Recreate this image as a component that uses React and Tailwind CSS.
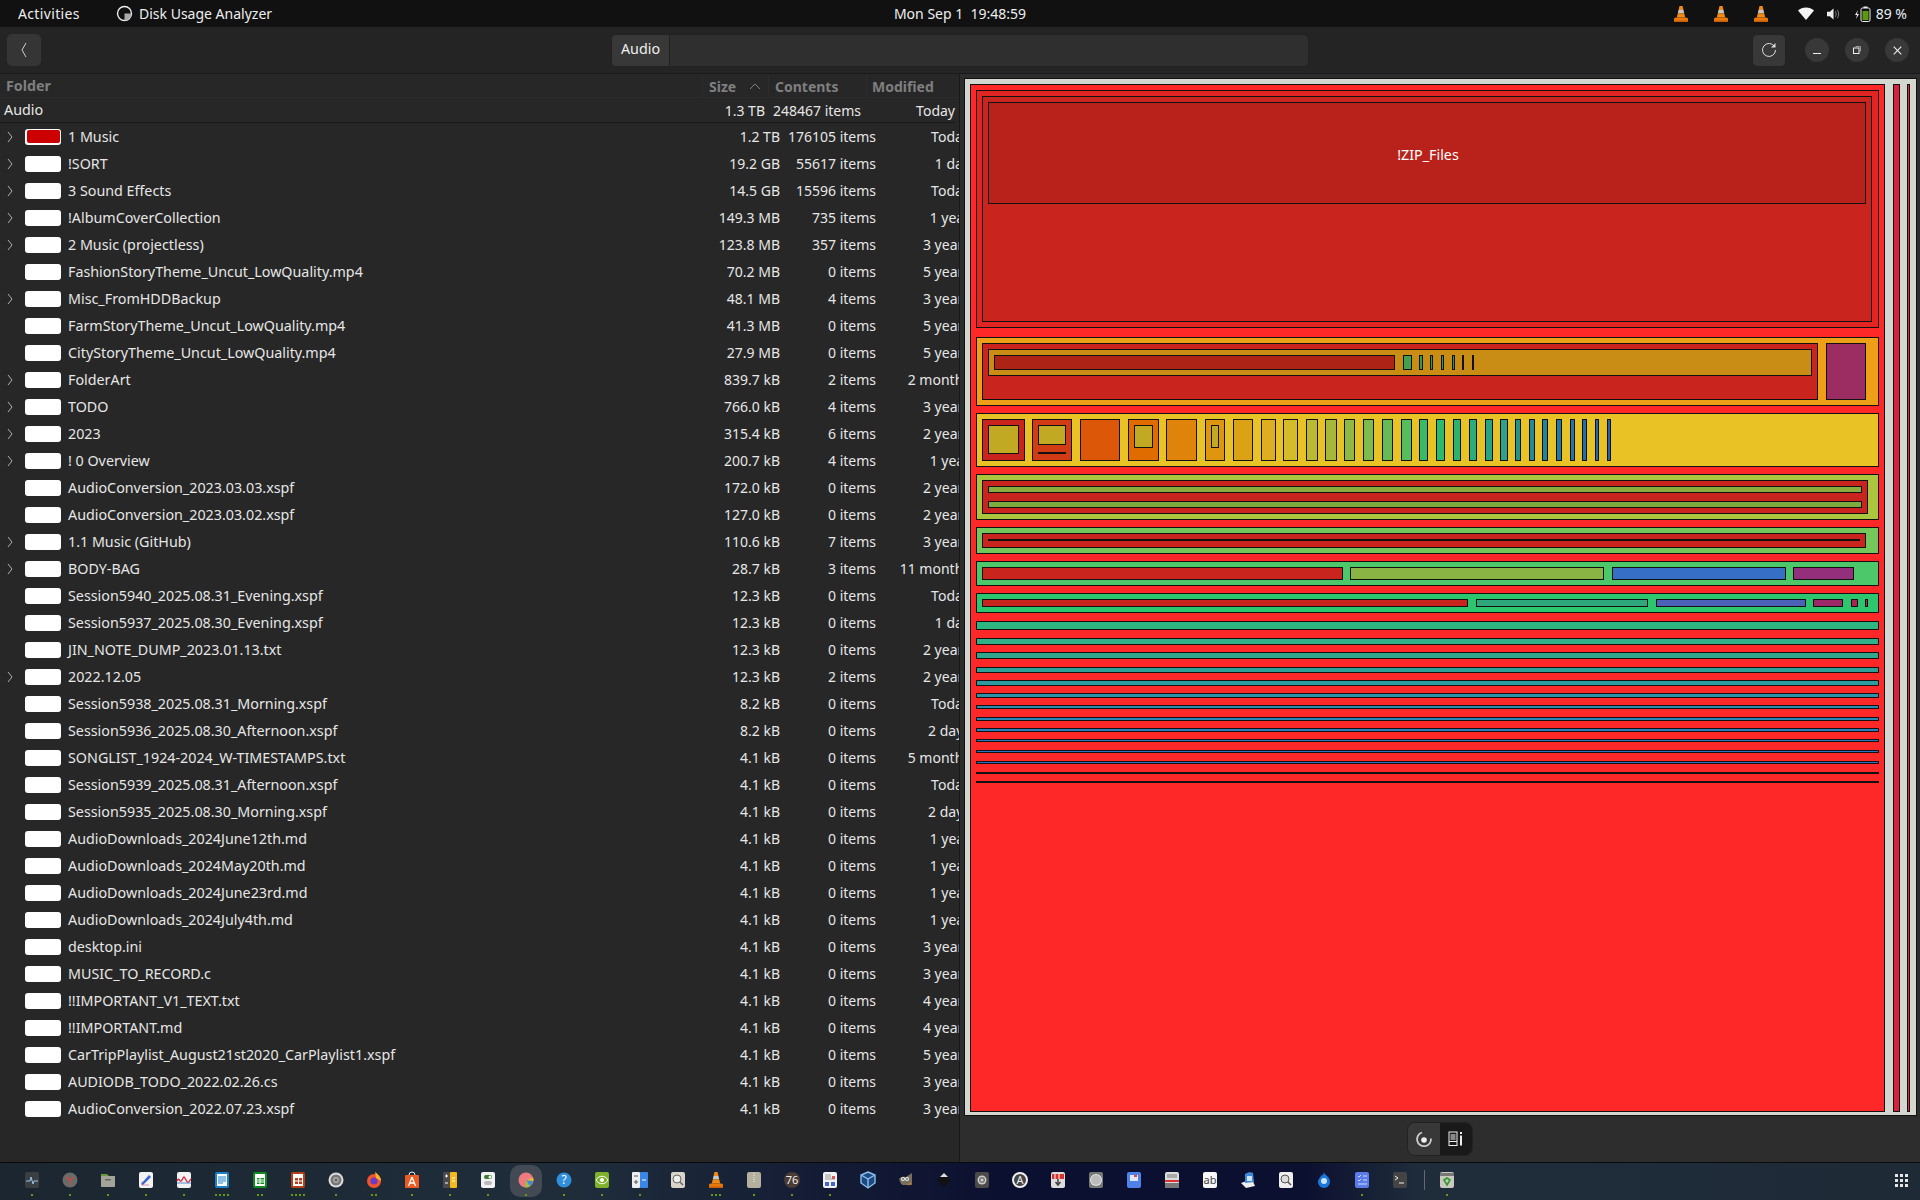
import React from "react";

const FILES = [
  ["1 Music", "1.2 TB", "176105", "Today", 1],
  ["!SORT", "19.2 GB", "55617", "1 day", 1],
  ["3 Sound Effects", "14.5 GB", "15596", "Today", 1],
  ["!AlbumCoverCollection", "149.3 MB", "735", "1 year", 1],
  ["2 Music (projectless)", "123.8 MB", "357", "3 years", 1],
  ["FashionStoryTheme_Uncut_LowQuality.mp4", "70.2 MB", "0", "5 years", 0],
  ["Misc_FromHDDBackup", "48.1 MB", "4", "3 years", 1],
  ["FarmStoryTheme_Uncut_LowQuality.mp4", "41.3 MB", "0", "5 years", 0],
  ["CityStoryTheme_Uncut_LowQuality.mp4", "27.9 MB", "0", "5 years", 0],
  ["FolderArt", "839.7 kB", "2", "2 months", 1],
  ["TODO", "766.0 kB", "4", "3 years", 1],
  ["2023", "315.4 kB", "6", "2 years", 1],
  ["! 0 Overview", "200.7 kB", "4", "1 year", 1],
  ["AudioConversion_2023.03.03.xspf", "172.0 kB", "0", "2 years", 0],
  ["AudioConversion_2023.03.02.xspf", "127.0 kB", "0", "2 years", 0],
  ["1.1 Music (GitHub)", "110.6 kB", "7", "3 years", 1],
  ["BODY-BAG", "28.7 kB", "3", "11 months", 1],
  ["Session5940_2025.08.31_Evening.xspf", "12.3 kB", "0", "Today", 0],
  ["Session5937_2025.08.30_Evening.xspf", "12.3 kB", "0", "1 day", 0],
  ["JIN_NOTE_DUMP_2023.01.13.txt", "12.3 kB", "0", "2 years", 0],
  ["2022.12.05", "12.3 kB", "2", "2 years", 1],
  ["Session5938_2025.08.31_Morning.xspf", "8.2 kB", "0", "Today", 0],
  ["Session5936_2025.08.30_Afternoon.xspf", "8.2 kB", "0", "2 days", 0],
  ["SONGLIST_1924-2024_W-TIMESTAMPS.txt", "4.1 kB", "0", "5 months", 0],
  ["Session5939_2025.08.31_Afternoon.xspf", "4.1 kB", "0", "Today", 0],
  ["Session5935_2025.08.30_Morning.xspf", "4.1 kB", "0", "2 days", 0],
  ["AudioDownloads_2024June12th.md", "4.1 kB", "0", "1 year", 0],
  ["AudioDownloads_2024May20th.md", "4.1 kB", "0", "1 year", 0],
  ["AudioDownloads_2024June23rd.md", "4.1 kB", "0", "1 year", 0],
  ["AudioDownloads_2024July4th.md", "4.1 kB", "0", "1 year", 0],
  ["desktop.ini", "4.1 kB", "0", "3 years", 0],
  ["MUSIC_TO_RECORD.c", "4.1 kB", "0", "3 years", 0],
  ["!!IMPORTANT_V1_TEXT.txt", "4.1 kB", "0", "4 years", 0],
  ["!!IMPORTANT.md", "4.1 kB", "0", "4 years", 0],
  ["CarTripPlaylist_August21st2020_CarPlaylist1.xspf", "4.1 kB", "0", "5 years", 0],
  ["AUDIODB_TODO_2022.02.26.cs", "4.1 kB", "0", "3 years", 0],
  ["AudioConversion_2022.07.23.xspf", "4.1 kB", "0", "3 years", 0],
];

const RC = "#c9241d";
const OL = "#c1a924";
const RECTS = [
  [964, 78, 1917, 1116, "#d3d7cf"],
  [970, 84, 1885, 1112, "#ff2828"],
  [1893, 84, 1900, 1112, "#d8203f"],
  [1907, 84, 1910, 1112, "#e2263a"],
  [976, 90, 1879, 328, "#e02523"],
  [982, 96, 1872, 322, RC],
  [988, 102, 1866, 204, "#b9221a"],
  [976, 337, 1879, 406, "#ec9f17"],
  [982, 343, 1818, 400, RC],
  [988, 349, 1812, 376, "#c98d15"],
  [994, 355, 1395, 370, "#ad2315"],
  [1403, 355, 1412, 370, "#43a04d"],
  [1419, 355, 1423, 370, "#2e9e50"],
  [1430, 355, 1433, 370, "#2a9a60"],
  [1441, 355, 1444, 370, "#2a9a60"],
  [1452, 355, 1455, 370, "#26907c"],
  [1462, 355, 1464, 370, "#111"],
  [1472, 355, 1474, 370, "#111"],
  [1826, 343, 1866, 400, "#9c2d63"],
  [976, 413, 1879, 467, "#e9c326"],
  [982, 419, 1025, 461, RC],
  [988, 425, 1019, 454, OL],
  [1032, 419, 1072, 461, "#d13c15"],
  [1038, 425, 1066, 445, OL],
  [1038, 452, 1066, 454, "#111"],
  [1080, 419, 1120, 461, "#dc5708"],
  [1128, 419, 1159, 461, "#e06c00"],
  [1134, 425, 1153, 448, OL],
  [1166, 419, 1197, 461, "#df830a"],
  [1205, 419, 1225, 461, "#df960f"],
  [1211, 425, 1219, 448, OL],
  [1233, 419, 1253, 461, "#dca216"],
  [1261, 419, 1276, 461, "#dfae20"],
  [1283, 419, 1298, 461, "#d3bb2a"],
  [1306, 419, 1318, 461, "#b9b933"],
  [1325, 419, 1337, 461, "#a5b83b"],
  [1344, 419, 1355, 461, "#90b944"],
  [1363, 419, 1374, 461, "#7dbb4c"],
  [1382, 419, 1393, 461, "#68bb54"],
  [1401, 419, 1412, 461, "#56bd5d"],
  [1419, 419, 1428, 461, "#39ba66"],
  [1436, 419, 1445, 461, "#2bbb6c"],
  [1453, 419, 1461, 461, "#2db370"],
  [1469, 419, 1477, 461, "#2bac7e"],
  [1485, 419, 1493, 461, "#2aa286"],
  [1500, 419, 1508, 461, "#2ea08c"],
  [1515, 419, 1521, 461, "#24948f"],
  [1529, 419, 1535, 461, "#23889a"],
  [1542, 419, 1548, 461, "#24849e"],
  [1556, 419, 1562, 461, "#2479a4"],
  [1570, 419, 1575, 461, "#2473aa"],
  [1582, 419, 1587, 461, "#246eb0"],
  [1595, 419, 1599, 461, "#2468b4"],
  [1607, 419, 1611, 461, "#2461b6"],
  [976, 474, 1879, 520, "#aac63f"],
  [982, 480, 1868, 514, RC],
  [988, 486, 1862, 493, "#8cab3d"],
  [988, 501, 1862, 508, "#7eab3e"],
  [976, 527, 1879, 554, "#74c75a"],
  [982, 533, 1866, 548, RC],
  [988, 539, 1860, 541, "#111"],
  [976, 561, 1879, 586, "#4cc76a"],
  [982, 567, 1343, 580, RC],
  [1350, 567, 1604, 580, "#8ab544"],
  [1612, 567, 1786, 580, "#3670c6"],
  [1793, 567, 1854, 580, "#932f7b"],
  [976, 593, 1879, 613, "#2cc66f"],
  [982, 599, 1468, 607, RC],
  [1476, 599, 1648, 607, "#2ea87c"],
  [1656, 599, 1806, 607, "#4c62b8"],
  [1813, 599, 1843, 607, "#9c2867"],
  [1851, 599, 1858, 607, "#a82558"],
  [1865, 599, 1868, 607, "#c8234a"],
  [976, 621, 1879, 630, "#2eb680"],
  [976, 638, 1879, 645, "#30b088"],
  [976, 652, 1879, 659, "#30a68f"],
  [976, 667, 1879, 673, "#2fa098"],
  [976, 680, 1879, 686, "#2e9a9f"],
  [976, 693, 1879, 698, "#2e92a8"],
  [976, 705, 1879, 709, "#2d8aae"],
  [976, 717, 1879, 721, "#2d84b6"],
  [976, 728, 1879, 732, "#2d80bd"],
  [976, 739, 1879, 742, "#2d79c2"],
  [976, 750, 1879, 753, "#2d73c4"],
  [976, 761, 1879, 764, "#2d6fc7"],
  [976, 772, 1879, 774, "#111"],
  [976, 781, 1879, 783, "#111"],
];

function Treemap() {
  return (
    <svg width="953" height="1038" viewBox="964 78 953 1038" className="block" shapeRendering="crispEdges">
      {RECTS.map(([x0, y0, x1, y1, f], i) =>
        x1 - x0 <= 2 || y1 - y0 <= 2 ? (
          <rect key={i} x={x0} y={y0} width={x1 - x0} height={y1 - y0} fill="#111" />
        ) : (
          <rect key={i} x={x0 + 0.5} y={y0 + 0.5} width={x1 - x0 - 1} height={y1 - y0 - 1} fill={f} stroke="#111" strokeWidth="1" />
        )
      )}
      <text x="1428" y="160" textAnchor="middle" fill="#fff" fontSize="14.3" fontFamily="'Noto Sans', sans-serif" shapeRendering="auto">!ZIP_Files</text>
    </svg>
  );
}

function Cone({ s = 18 }) {
  return (
    <svg width={s} height={s} viewBox="0 0 18 18">
      <path d="M7.5 1h3l1 4h-5z" fill="#ef8a1a" />
      <path d="M6.5 5h5l.7 3.2H5.8z" fill="#c8c8c8" />
      <path d="M5.8 8.2h6.4l1 4.3H4.8z" fill="#f08a12" />
      <path d="M2 13.5c0-1 2-1 3-1h8c1 0 3 0 3 1v3H2z" fill="#e8780c" />
      <rect x="2" y="15.5" width="14" height="1.5" fill="#c85f08" />
    </svg>
  );
}

const Paper = ({ c = "#f2f2f2", children }) => (
  <svg width="18" height="18" viewBox="0 0 18 18">
    <rect x="2" y="1" width="14" height="16" rx="2" fill={c} />
    {children}
  </svg>
);
const Svg = ({ children }) => <svg width="18" height="18" viewBox="0 0 18 18">{children}</svg>;

const DOCK = [
  [1, <Paper c="#3a3f44"><path d="M3 10h4l1-4 2 7 1-3h4" stroke="#9cc3e8" strokeWidth="1" fill="none" /></Paper>],
  [1, <Svg><circle cx="9" cy="9" r="7.5" fill="#6a6a6a" /><path d="M9 9 5 6M9 9l4-3M9 9v5" stroke="#d9483b" strokeWidth="1.2" /></Svg>],
  [1, <Svg><path d="M2 3h6l2 2h6v2H2z" fill="#6c9a3a" /><rect x="2" y="5" width="14" height="11" rx="1" fill="#a5a49b" /><rect x="6" y="8" width="6" height="1.5" fill="#666" /></Svg>],
  [1, <Paper><path d="M4 13 12 4l2 2-8 8z" fill="#3465d4" /><path d="M4 14h8M4 11h4" stroke="#b59" strokeOpacity=".6" /></Paper>],
  [1, <Paper><path d="M2 10c2-5 3 3 5-1s2-4 4 0 2 3 5-1" stroke="#d0314a" strokeWidth="1.4" fill="none" /><path d="M2 12h14" stroke="#5b8bd0" /></Paper>],
  [4, <Paper c="#1c7fc9"><rect x="4" y="3" width="10" height="12" fill="#fff" /><path d="M5 6h8M5 8h8M5 10h8M5 12h5" stroke="#1c7fc9" /></Paper>],
  [2, <Paper c="#0e8a1e"><rect x="4" y="3" width="10" height="12" fill="#fff" /><rect x="6" y="7" width="7" height="6" fill="#0e8a1e" /><path d="M6 9h7M6 11h7M9 7v6" stroke="#fff" /></Paper>],
  [4, <Paper c="#b5411c"><rect x="4" y="3" width="10" height="12" fill="#fff" /><rect x="6" y="7" width="7" height="6" fill="#b5411c" /><path d="M6 10h7M9.5 7v6" stroke="#fff" /></Paper>],
  [1, <Svg><circle cx="9" cy="9" r="7.5" fill="#ddd" /><circle cx="9" cy="9" r="5.5" fill="#777" /><circle cx="9" cy="9" r="3" fill="#aaa" /><circle cx="9" cy="9" r="1.5" fill="#666" /></Svg>],
  [2, <Svg><circle cx="9" cy="10" r="7" fill="#f2542d" /><circle cx="9" cy="10" r="3.5" fill="#6a3ac9" /><path d="M10 1c3 2 6 5 6 9l-5-3z" fill="#ffb02a" /></Svg>],
  [1, <Svg><path d="M6 4a3 3 0 0 1 6 0" stroke="#eee" fill="none" /><rect x="2" y="4" width="14" height="13" rx="1" fill="#ee5a24" /><path d="M9 6 5.5 15M9 6l3.5 9M6.5 12h5" stroke="#fff" strokeWidth="1.3" /></Svg>],
  [1, <Svg><rect x="2" y="1" width="7" height="16" rx="1" fill="#4b4b4b" /><rect x="9" y="1" width="7" height="16" rx="1" fill="#f4b91d" /><path d="M4 5h3M5.5 3.5v3M4 12h3M11 7h3M11 10h3" stroke="#fff" /></Svg>],
  [1, <Paper><rect x="5" y="4" width="8" height="4" rx="2" fill="#3a7d2c" /><circle cx="11" cy="6" r="1.5" fill="#fff" /><rect x="5" y="10" width="8" height="4" rx="2" fill="#bbb" /></Paper>],
  [1, <Svg><circle cx="9" cy="9" r="7.5" fill="#ef7a7f" /><path d="M9 9l7 1a7.5 7.5 0 0 1-3 5.5z" fill="#3f8fd0" /><path d="M9 9l4 6.5a7.5 7.5 0 0 1-5 1z" fill="#9ac23c" /><path d="M9 9l7-2.5a7.5 7.5 0 0 1 .5 3.5z" fill="#e6b93a" /></Svg>],
  [1, <Svg><circle cx="9" cy="9" r="7.5" fill="#2f8fdc" /><text x="9" y="13" textAnchor="middle" fontSize="12" fill="#fff" fontFamily="'Noto Sans',sans-serif">?</text></Svg>],
  [1, <Paper c="#7fb22a"><path d="M3 9c3-5 9-5 12 0-3 5-9 5-12 0z" fill="none" stroke="#fff" /><circle cx="9" cy="9" r="2" fill="#fff" /></Paper>],
  [1, <Svg><rect x="1" y="1" width="8" height="16" rx="1" fill="#eee" /><rect x="9" y="1" width="8" height="16" rx="1" fill="#3a86e6" /><path d="M3 5h4M3 11h4M5 9v4" stroke="#555" /><path d="M11 9h4" stroke="#fff" /></Svg>],
  [0, <Paper c="#d8d4c8"><circle cx="8" cy="8" r="4" fill="#eee" stroke="#666" /><path d="m11 11 3 3" stroke="#666" strokeWidth="1.5" /></Paper>],
  [3, <Cone />],
  [1, <Paper c="#b5b09e"><path d="M9 2v9" stroke="#eee" strokeDasharray="1 1" /></Paper>],
  [1, <Svg><circle cx="9" cy="9" r="8" fill="#4a3b36" /><text x="9" y="13" textAnchor="middle" fontSize="11" fill="#eee" fontFamily="'Noto Sans',sans-serif">76</text></Svg>],
  [1, <Paper><path d="M4 4h6M4 6h6M4 8h10" stroke="#999" /><rect x="11" y="5" width="3" height="3" fill="#d55" /><rect x="4" y="11" width="4" height="4" fill="#46c" /><rect x="10" y="11" width="4" height="4" fill="#46c" /></Paper>],
  [0, <Svg><path d="M9 1 16 4v8l-7 5-7-5V4z" fill="#1a4a80" stroke="#8ec0ee" strokeWidth="1.4" /><path d="M3 4.5 9 8l6-3.5M9 8v8" stroke="#8ec0ee" strokeWidth="1.4" fill="none" /></Svg>],
  [0, <Svg><path d="M2 8c3-3 4-2 7-2l6-4v12H6C4 14 3 10 2 8z" fill="#77705f" /><circle cx="6" cy="8" r="2" fill="#eee" /><circle cx="10" cy="8" r="2" fill="#eee" /><circle cx="6" cy="8" r=".8" fill="#111" /><circle cx="10" cy="8" r=".8" fill="#111" /><path d="M11 14l3-2" stroke="#d07a2a" strokeWidth="1.5" /></Svg>],
  [0, <Svg><path d="M9 2 16 9l-7 7-7-7z" fill="#111" /><path d="M9 2 13 6H5z" fill="#dcdcdc" /></Svg>],
  [0, <Paper c="#4a4a4a"><circle cx="9" cy="9" r="4.5" fill="#ccc" /><circle cx="9" cy="9" r="3" fill="#777" /><circle cx="9" cy="9" r="1.5" fill="#ccc" /></Paper>],
  [0, <Svg><circle cx="9" cy="9" r="7" fill="#444" stroke="#eee" strokeWidth="2" /><text x="9" y="13" textAnchor="middle" fontSize="11" fill="#eee" fontFamily="'Noto Sans',sans-serif">A</text></Svg>],
  [0, <Paper c="#ddd"><path d="M3 3h12v5H3z" fill="#d7322c" /><path d="M6 3v5M10 3v5" stroke="#fff" /><path d="M9 8v6M6.5 11 9 14l2.5-3" stroke="#444" strokeWidth="1.5" fill="none" /></Paper>],
  [0, <Paper c="#777"><circle cx="9" cy="9" r="6" fill="#e6e6e6" /><circle cx="9" cy="9" r="5" fill="#bbb" /></Paper>],
  [0, <Paper c="#4f82e8"><rect x="5" y="4" width="8" height="6" fill="#dfe8fb" /><rect x="9" y="4" width="3" height="2" fill="#d44" /></Paper>],
  [0, <Paper c="#dcdcdc"><path d="M4 4h10M4 6h10" stroke="#777" /><rect x="2" y="9" width="14" height="2" fill="#d33" /><rect x="2" y="12" width="14" height="5" fill="#777" /></Paper>],
  [0, <Paper c="#f7f7f7"><text x="9" y="13" textAnchor="middle" fontSize="11" fill="#444" fontFamily="'Noto Sans',sans-serif">ab</text></Paper>],
  [0, <Svg><path d="M2 12 13 8l3 7-9 2z" fill="#eee" /><path d="M6 3c3-2 6-2 8-1l1 9-9 1z" fill="#3c8ad8" /><path d="M8 5h5v5H8z" fill="#cfe3f7" /></Svg>],
  [0, <Paper c="#eee"><circle cx="8" cy="8" r="4" fill="#ddd" stroke="#555" /><path d="m11 11 3 3" stroke="#555" strokeWidth="1.5" /></Paper>],
  [0, <Svg><path d="M9 1c0 3 6 4 6 10a6 6 0 0 1-12 0c0-4 3-4 3-7 1 1 2 1 3-3z" fill="#1a78dc" /><circle cx="9" cy="10" r="3" fill="#cfe3f7" /></Svg>],
  [1, <Paper c="#5b7ce8"><path d="m5 5 1 1 2-2M10 5h4M5 9l1 1 2-2M10 9h4M5 13h9" stroke="#cfd9ff" fill="none" /></Paper>],
  [0, <Paper c="#444"><path d="m4 5 3 2-3 2M8 12h5" stroke="#eee" fill="none" /></Paper>],
];

const Chevron = () => (
  <svg width="8" height="12" viewBox="0 0 8 12"><path d="M2 1l4 5-4 5" fill="none" stroke="#b0b0b0" strokeWidth="1" /></svg>
);

function DockSlot({ dots, icon, active }) {
  return (
    <div className="relative flex h-[37px] w-[38px] shrink-0 items-center justify-center pb-[3px]">
      {active && <div className="absolute top-[2px] h-[32px] w-[32px] rounded-[10px] bg-[#434a54]" />}
      <div className="relative">{icon}</div>
      <div className="absolute bottom-[4px] flex gap-[2px]">
        {Array.from({ length: dots }).map((_, i) => (
          <div key={i} className="h-[2px] w-[2px] bg-[#5f9c10]" />
        ))}
      </div>
    </div>
  );
}

export default function App() {
  return (
    <div className="flex h-[1200px] w-[1920px] flex-col overflow-hidden bg-[#2d2d2d] text-[14px] text-[#e6e6e6] [font-family:'Noto_Sans',sans-serif]">
      <div className="grid h-[27px] shrink-0 grid-cols-[1fr_auto_1fr] items-center bg-[#111111] text-[14px] text-[#eeeeee]">
        <div className="flex items-center pl-[18px]">
          <span className="w-[63px] tracking-[0.35px]">Activities</span>
          <svg className="ml-[35px]" width="17" height="17" viewBox="0 0 17 17">
            <circle cx="8.5" cy="8.5" r="7" fill="none" stroke="#eee" strokeWidth="1.4" />
            <path d="M8.5 8.5h7a7 7 0 0 1-7 7z" fill="#aaa" />
          </svg>
          <span className="ml-[6px]">Disk Usage Analyzer</span>
        </div>
        <div className="whitespace-pre">Mon Sep 1  19:48:59</div>
        <div className="flex items-center justify-end pr-[13px]">
          <Cone s={18} />
          <div className="ml-[22px]"><Cone s={18} /></div>
          <div className="ml-[22px]"><Cone s={18} /></div>
          <svg className="ml-[28px]" width="16" height="13" viewBox="0 0 16 13"><path d="M0 3.5C4-.5 12-.5 16 3.5L8 13z" fill="#f4f4f4" /></svg>
          <svg className="ml-[13px]" width="14" height="14" viewBox="0 0 15 14"><path d="M0 4.5h3L7 1v12L3 9.5H0z" fill="#eee" /><path d="M9 4c1 1 1 5 0 6M11 2.5c2 2 2 7 0 9" stroke="#888" fill="none" /></svg>
          <svg className="ml-[13px]" width="17" height="16" viewBox="0 0 17 16"><path d="M4 4 1 9h2l-1 4 3-5H3z" fill="#eee" /><rect x="7" y="2" width="9" height="13.5" rx="1.5" fill="none" stroke="#eee" /><rect x="9.5" y="0.5" width="4" height="1.5" fill="#eee" /><rect x="8.5" y="5" width="6" height="9" fill="#5b9a0c" /></svg>
          <span className="ml-[5px] text-[#e8f0f8]">89 %</span>
        </div>
      </div>

      <div className="flex h-[47px] shrink-0 items-center border-b border-[#191919] bg-[#242424]">
        <button className="ml-[7px] flex h-[32px] w-[34px] items-center justify-center rounded-[5px] bg-[#353535]">
          <svg width="8" height="16" viewBox="0 0 8 16"><path d="M6 1 2 8l4 7" fill="none" stroke="#cfcfcf" strokeWidth="1" /></svg>
        </button>
        <div className="ml-[570px] flex h-[33px] w-[698px] overflow-hidden rounded-[5px] border border-[#222222] bg-[#2f2f2f]">
          <div className="flex w-[58px] items-center justify-center border-r border-[#222222] bg-[#383838] pb-[2px] text-[14.3px] text-[#eeeeee]">Audio</div>
        </div>
        <button className="ml-[443px] flex h-[33px] w-[34px] items-center justify-center rounded-[5px] border border-[#222222] bg-[#383838]">
          <svg width="16" height="16" viewBox="0 0 16 16"><path d="M13.5 4.5A6.5 6.5 0 1 0 14.5 8" fill="none" stroke="#ddd" strokeWidth="1" /><path d="M14.5 1v4.5H10z" fill="#ddd" /></svg>
        </button>
        <div className="ml-[19px] flex h-[24px] w-[24px] items-center justify-center rounded-full bg-[#383838]">
          <div className="mt-[6px] h-[1px] w-[8px] bg-[#eee]" />
        </div>
        <div className="ml-[16px] flex h-[24px] w-[24px] items-center justify-center rounded-full bg-[#383838]">
          <svg width="8" height="8" viewBox="0 0 8 8"><rect x=".5" y="2" width="5.5" height="5.5" fill="none" stroke="#eee" /><path d="M2.5 .5H7.5V5.5" fill="none" stroke="#999" /></svg>
        </div>
        <div className="ml-[16px] flex h-[24px] w-[24px] items-center justify-center rounded-full bg-[#383838]">
          <svg width="9" height="9" viewBox="0 0 9 9"><path d="M.7.7l7.6 7.6M8.3.7.7 8.3" stroke="#eee" strokeWidth="1.1" /></svg>
        </div>
      </div>

      <div className="flex min-h-0 flex-1">
        <div className="w-[960px] shrink-0 overflow-hidden border-r border-[#191919] bg-[#272727]">
          <div className="flex h-[24px] w-[959px] items-center border-b border-[#2c2c2c] text-[14px] font-bold text-[#7f7f7f]">
            <div className="w-[702px] pl-[6px] pt-[1px] text-[14.3px]">Folder</div>
            <div className="flex h-full w-[66px] items-center border-l border-[#2c2c2c] pl-[6px] pt-[1px]">
              Size
              <svg className="ml-[13px]" width="12" height="7" viewBox="0 0 12 7"><path d="M1 6l5-5 5 5" fill="none" stroke="#7f7f7f" /></svg>
            </div>
            <div className="flex h-full w-[98px] items-center border-l border-[#2c2c2c] pl-[6px] pt-[1px]">Contents</div>
            <div className="flex h-full flex-1 items-center border-l border-[#2c2c2c] pl-[5px] pt-[1px]">Modified</div>
          </div>
          <div className="flex h-[25px] w-[955px] items-center border-b border-[#191919] pl-[4px]">
            <div className="flex-1 text-[14.3px]">Audio</div>
            <div className="w-[90px] text-right">1.3 TB</div>
            <div className="w-[96px] text-right">248467 items</div>
            <div className="w-[94px] text-right">Today</div>
          </div>
          {FILES.map(([name, size, n, mod, arrow], i) => (
            <div key={i} className="flex h-[27px] w-[970px] items-center">
              <div className="flex w-[25px] shrink-0 justify-center pr-[5px]">{arrow ? <Chevron /> : null}</div>
              <div className="flex h-[16px] w-[36px] shrink-0 items-center justify-center rounded-[3px] bg-white">
                {i === 0 && <div className="h-[13px] w-[33px] rounded-[2px] bg-[#cc0000]" />}
              </div>
              <div className="ml-[7px] flex-1 whitespace-nowrap text-[14.3px]">{name}</div>
              <div className="w-[90px] text-right">{size}</div>
              <div className="w-[96px] text-right">{n} items</div>
              <div className="w-[94px] whitespace-nowrap text-right">{mod}</div>
            </div>
          ))}
        </div>
        <div className="flex-1 pl-[4px] pt-[4px]">
          <Treemap />
          <div className="ml-[443px] mt-[6px] flex h-[34px] w-[66px] overflow-hidden rounded-[8px] border border-[#222222]">
            <div className="flex w-[32px] items-center justify-center bg-[#383838]">
              <svg width="18" height="18" viewBox="0 0 18 18"><circle cx="9" cy="10" r="2.8" fill="#eee" /><path d="M7 2.5a7 7 0 1 0 9 6" fill="none" stroke="#ccc" strokeWidth="1.8" /></svg>
            </div>
            <div className="flex flex-1 items-center justify-center bg-[#191919]">
              <svg width="16" height="16" viewBox="0 0 16 16"><rect x="1" y="1" width="8" height="13.5" fill="none" stroke="#eee" /><rect x="2.5" y="3" width="5" height="6" fill="#888" /><path d="M1 10.5h8" stroke="#eee" /><rect x="12" y="1" width="2" height="2" fill="#eee" /><rect x="12" y="4.5" width="2" height="10" fill="#eee" /></svg>
            </div>
          </div>
        </div>
      </div>

      <div className="flex h-[38px] shrink-0 items-center border-t border-[#0a0a0a] bg-[linear-gradient(90deg,#1b2630_0%,#1f2d3b_30%,#0c1030_52%,#0c1030_68%,#1f2d3b_74%,#1e2a36_100%)] pl-[13px]">
        {DOCK.map(([dots, icon], i) => (
          <DockSlot key={i} dots={dots} icon={icon} active={i === 13} />
        ))}
        <div className="mb-[3px] ml-[5px] mr-[3px] h-[20px] w-[1px] bg-[#667]" />
        <DockSlot dots={1} icon={<Paper c="#c9c9c0"><rect x="2" y="2" width="14" height="3" fill="#777" /><path d="M6 9l3-2 3 2-3 5z" fill="none" stroke="#2f9a2a" strokeWidth="1.6" /></Paper>} />
        <div className="mb-[3px] ml-[429px] grid grid-cols-3 gap-[2px]">
          {Array.from({ length: 9 }).map((_, i) => (
            <div key={i} className="h-[3px] w-[3px] bg-[#e6e6e6]" />
          ))}
        </div>
      </div>
    </div>
  );
}
